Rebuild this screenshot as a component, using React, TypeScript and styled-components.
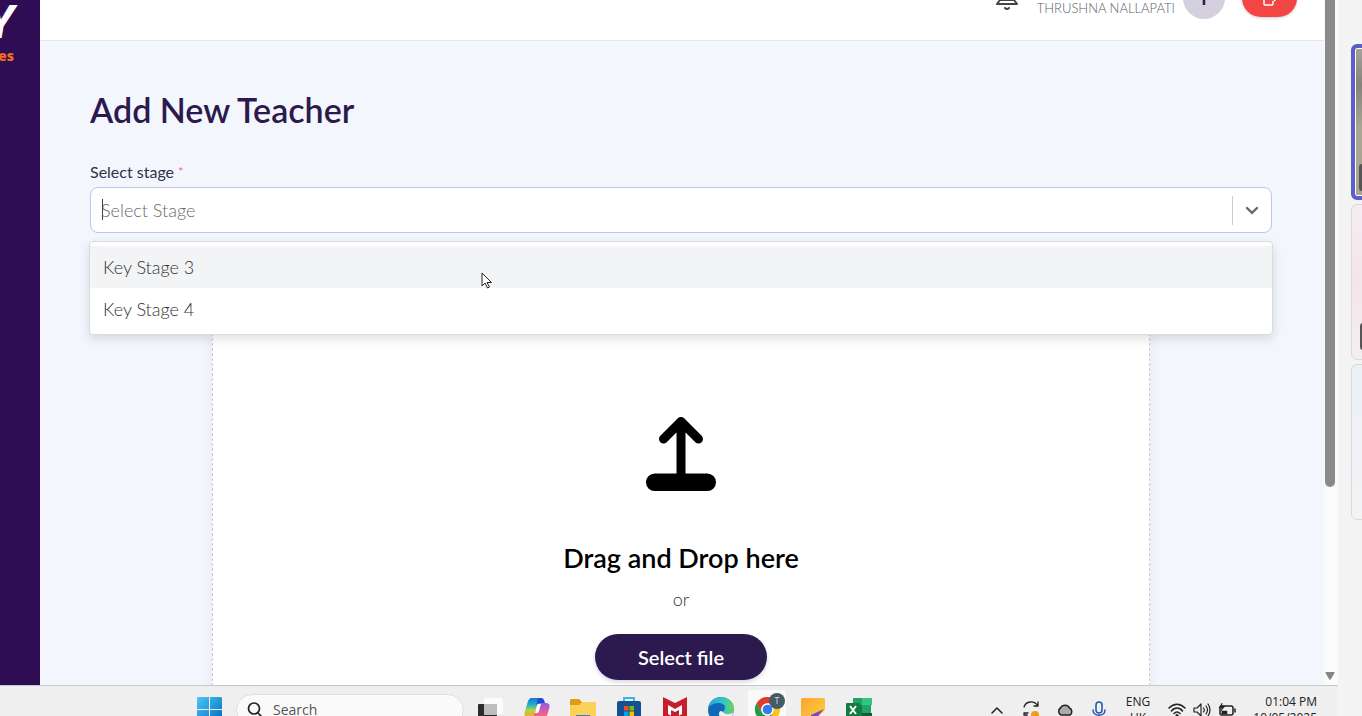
import React from "react";
import styled, { createGlobalStyle, css } from "styled-components";

const GlobalStyle = createGlobalStyle`
  *, *::before, *::after { box-sizing: border-box; }
  body { margin: 0; overflow: hidden; background: #f4f4f4; font-family: Lato, "Liberation Sans", sans-serif; color: #2c1a4f; }
  button, input { font: inherit; color: inherit; }
  button { border: 0; background: none; padding: 0; cursor: pointer; }
  svg { display: block; flex: none; }
`;

const Shell = styled.div`
  display: grid;
  grid-template-columns: minmax(0, 1fr) 24px;
  height: 100vh;
  overflow: hidden;
`;

const Desktop = styled.div`
  display: grid;
  grid-template-rows: minmax(0, 1fr) 31px;
  min-height: 0;
`;

const Browser = styled.div`
  display: grid;
  grid-template-columns: 40px minmax(0, 1fr) 14px;
  min-height: 0;
  overflow: hidden;
`;

const Sidebar = styled.aside`
  display: flex;
  flex-direction: column;
  align-items: flex-end;
  padding-right: 26px;
  background: #2e0d55;
  overflow: hidden;
`;

const LogoMark = styled.span`
  font-family: Roboto, sans-serif;
  font-size: 46px;
  line-height: 44px;
  font-weight: 800;
  font-style: italic;
  color: #fff;
`;

const LogoTagline = styled.span`
  font-family: "Open Sans", sans-serif;
  font-size: 14px;
  line-height: 24px;
  font-weight: 800;
  color: #f26a1b;
`;

const Main = styled.div`
  min-width: 0;
  background: #f4f6fd;
  overflow: hidden;
`;

const Header = styled.header`
  display: flex;
  align-items: center;
  justify-content: flex-end;
  height: 85px;
  margin-top: -44px;
  padding-right: 27px;
  background: #fff;
  border-bottom: 1px solid #e6e8ee;
`;

const IconButton = styled.button`
  display: flex;
  margin-right: 18px;
  color: #444;
`;

const User = styled.div`
  display: flex;
  flex-direction: column;
  align-items: flex-end;
  margin-right: 8px;
  font-size: 13px;
  font-weight: 300;
  line-height: 20px;
  color: #5c5c66;
`;

const Avatar = styled.div`
  display: flex;
  align-items: center;
  justify-content: center;
  width: 42px;
  height: 42px;
  margin-right: 17px;
  border-radius: 50%;
  background: #d5d0df;
  font-size: 18px;
  font-weight: 700;
`;

const LogoutButton = styled.button`
  display: flex;
  align-items: center;
  justify-content: center;
  width: 55px;
  height: 38px;
  border-radius: 19px;
  background: #f44545;
  box-shadow: 0 1px 3px rgba(0, 0, 0, 0.2);
  color: #fff;
`;

const Content = styled.main`
  padding: 49px 52px 0 50px;
`;

const Title = styled.h1`
  margin: 0 0 32px;
  font-size: 34px;
  line-height: 40px;
  font-weight: 600;
`;

const Label = styled.label`
  display: block;
  margin-bottom: 5px;
  font-size: 16px;
  line-height: 20px;
  color: #33304a;
`;

const Required = styled.span`
  color: #f06a6a;
  font-size: 12px;
  vertical-align: top;
`;

const Field = styled.div`
  position: relative;
`;

const Control = styled.div`
  display: flex;
  align-items: center;
  height: 46px;
  background: #fff;
  border: 1px solid #c3c2ea;
  border-radius: 8px;
`;

const ComboInput = styled.input`
  flex: 1;
  min-width: 0;
  height: 44px;
  padding: 0 10px;
  border: 0;
  outline: 0;
  background: none;
  font-size: 18px;
  font-weight: 300;
  &::placeholder { color: #6a6a6a; opacity: 1; }
`;

const Caret = styled.span`
  position: absolute;
  left: 12px;
  top: 12px;
  width: 1px;
  height: 21px;
  background: #444;
`;

const Toggle = styled.button`
  display: flex;
  align-items: center;
  justify-content: center;
  width: 39px;
  height: 29px;
  border-left: 1px solid #ccc;
  color: #666;
`;

const Menu = styled.ul`
  position: absolute;
  z-index: 2;
  top: 54px;
  left: -1px;
  right: -1px;
  margin: 0;
  padding: 4px 0;
  list-style: none;
  background: #fff;
  border: 1px solid #d9dae2;
  border-radius: 4px;
  box-shadow: 0 4px 11px rgba(0, 0, 0, 0.12);
`;

const Option = styled.li<{ $active?: boolean }>`
  padding: 11px 13px;
  font-size: 18px;
  font-weight: 300;
  line-height: 20px;
  color: #333;
  background: ${(p) => (p.$active ? "#f3f4f6" : "transparent")};
`;

const DropZone = styled.section`
  display: flex;
  flex-direction: column;
  align-items: center;
  margin: 60px 122px 0;
  padding: 123px 0 80px;
  background: #fff;
  border: 1px dashed #ccccd2;
  box-shadow: 0 0 12px rgba(40, 40, 80, 0.06);
  color: #000;
`;

const DropTitle = styled.h2`
  margin: 50px 0 12px;
  font-size: 27px;
  line-height: 34px;
  font-weight: 600;
`;

const DropHint = styled.p`
  margin: 0 0 23px;
  font-size: 18px;
  font-weight: 300;
  line-height: 24px;
  color: #333;
`;

const SelectFile = styled.button`
  height: 46px;
  padding: 0 43px;
  border-radius: 23px;
  background: #2c1a4f;
  box-shadow: 0 2px 4px rgba(60, 20, 100, 0.2);
  color: #fff;
  font-size: 20px;
  font-weight: 600;
`;

const Scrollbar = styled.div`
  display: flex;
  flex-direction: column;
  align-items: center;
  justify-content: space-between;
  padding: 0 3px 5px 1px;
  background: #fbfbfc;
`;

const Thumb = styled.div`
  width: 10px;
  height: calc(100% - 193px);
  border-radius: 0 0 5px 5px;
  background: #8a8a8a;
`;

const Taskbar = styled.footer`
  display: flex;
  align-items: center;
  height: 48px;
  padding: 0 21px 0 186px;
  background: #efefef;
  border-top: 1px solid #c3c8c9;
  font-family: "Open Sans", sans-serif;
  color: #222;
`;

const TaskButton = styled.button<{ $width?: number; $active?: boolean }>`
  position: relative;
  display: flex;
  flex: none;
  align-items: center;
  justify-content: center;
  width: ${(p) => p.$width ?? 46}px;
  height: 40px;
  ${(p) =>
    p.$active &&
    css`
      width: 38px;
      margin: 0 4px;
      border-radius: 4px;
      background: #fafafa;
    `}
`;

const SearchBox = styled.label`
  display: flex;
  align-items: center;
  gap: 10px;
  width: 228px;
  height: 32px;
  margin: 0 4px 0 4px;
  padding: 0 10px;
  border: 1px solid #e0e0e0;
  border-radius: 16px;
  background: #fafafa;
`;

const SearchInput = styled.input`
  flex: 1;
  min-width: 0;
  padding: 0;
  border: 0;
  outline: 0;
  background: none;
  font-size: 14px;
  &::placeholder { color: #555; opacity: 1; }
`;

const Badge = styled.span`
  position: absolute;
  top: 3px;
  right: 1px;
  width: 16px;
  height: 16px;
  border-radius: 50%;
  background: #455a64;
  color: #d5dde0;
  font-size: 9px;
  line-height: 16px;
  text-align: center;
`;

const Tray = styled.div`
  display: flex;
  align-items: center;
  margin-left: auto;
`;

const TrayText = styled.div<{ $width: number; $align: string }>`
  width: ${(p) => p.$width}px;
  font-size: 12px;
  line-height: 16px;
  text-align: ${(p) => p.$align};
  white-space: nowrap;
`;

const StatusGroup = styled.div`
  display: flex;
  margin-left: 4px;
`;

const Rail = styled.aside`
  display: flex;
  flex-direction: column;
  gap: 4px;
  padding: 44px 0 0 13px;
  background: #f4f4f4;
  overflow: hidden;
`;

const tileFill = {
  video: "linear-gradient(#a5a29c, #85847a 25%, #aaa795 55%, #a9a28f)",
  rose: "linear-gradient(#f6ecf1, #f3e6eb 50%, #f5eef0)",
  mist: "linear-gradient(#eaf1f5, #f1f1f5 60%, #f2f4f5)",
};

const Tile = styled.div<{ $tone: keyof typeof tileFill; $speaking?: boolean }>`
  display: flex;
  flex: none;
  align-items: flex-end;
  width: 276px;
  height: 156px;
  padding: 0 0 9px 8px;
  border: 1px solid #dcd8dc;
  border-radius: 6px;
  background: ${(p) => tileFill[p.$tone]};
  ${(p) =>
    p.$speaking &&
    css`
      padding: 0 0 5px 4px;
      border: 4px solid #5b5fc7;
      box-shadow: inset 0 0 0 1px #fff;
    `}
`;

const NameTag = styled.span`
  width: 90px;
  height: 27px;
  border-radius: 3px;
  background: #555;
`;

const BellIcon = () => (
  <svg width="24" height="24" viewBox="0 0 24 24" fill="none" stroke="currentColor" strokeWidth="2" strokeLinecap="round" strokeLinejoin="round">
    <path d="M12 2a7 7 0 0 0-7 7v5l-3 4h20l-3-4V9a7 7 0 0 0-7-7zM5 14h14M10 22q2 2 4 0" />
  </svg>
);

const LogoutIcon = () => (
  <svg width="18" height="18" viewBox="0 0 18 18" fill="none" stroke="currentColor" strokeWidth="1.5" strokeLinejoin="round">
    <path d="M12 5V3q0-1-1-1H4Q3 2 3 3v12q0 1 1 1h7q1 0 1-1v-3M8 9h8m-3-3 3 3-3 3" />
  </svg>
);

const UploadIcon = () => (
  <svg width="70" height="74" viewBox="0 0 70 74">
    <path d="M35 5v54M17.500 22 35 4.500 52.500 22" fill="none" stroke="#000" strokeWidth="9" strokeLinecap="round" strokeLinejoin="round" />
    <rect y="56.500" width="70" height="17.500" rx="8.700" />
  </svg>
);

const ChevronIcon = () => (
  <svg width="20" height="20" viewBox="0 0 20 20" fill="none" stroke="currentColor" strokeWidth="2.400" strokeLinecap="round">
    <path d="m5 8 5 4.800L15 8" />
  </svg>
);

const PointerIcon = styled.svg`
  position: absolute;
  z-index: 3;
  left: 391px;
  top: 85px;
`;

const WindowsIcon = () => (
  <svg width="25" height="25" viewBox="0 0 25 25">
    <defs>
      <linearGradient id="win" x1="0" y1="0" x2="1" y2="1">
        <stop stopColor="#4cc8f5" /><stop offset="1" stopColor="#0067c0" />
      </linearGradient>
    </defs>
    <path fill="url(#win)" d="M1 0h11v12H0V1zM13 0h11l1 1v11H13zM0 13h12v12H0zM13 13h12v12H13z" />
  </svg>
);

const SearchIcon = () => (
  <svg width="16" height="16" viewBox="0 0 16 16" fill="none" stroke="#222" strokeWidth="1.700" strokeLinecap="round">
    <circle cx="7" cy="6.500" r="5.500" /><path d="m11 11 4 4" />
  </svg>
);

const TaskViewIcon = () => (
  <svg width="26" height="24" viewBox="0 0 26 24">
    <rect x="6" width="19" height="16" rx="2" fill="#fbfbfb" />
    <rect y="6" width="19" height="17" rx="1" fill="#2b2b2b" />
    <path d="M6 6h13v11H6z" fill="#bdbdbd" />
  </svg>
);

const CopilotIcon = () => (
  <svg width="26" height="24" viewBox="0 0 26 24">
    <defs>
      <linearGradient id="cpA" x1="0" y1="0" x2="0" y2="1">
        <stop stopColor="#1676dd" /><stop offset=".35" stopColor="#22b1c4" /><stop offset=".65" stopColor="#b5d444" /><stop offset="1" stopColor="#f7a72d" />
      </linearGradient>
      <linearGradient id="cpB" x1="0" y1="0" x2="0" y2="1">
        <stop stopColor="#8e5be8" /><stop offset=".5" stopColor="#ea5b9c" /><stop offset="1" stopColor="#f9804d" />
      </linearGradient>
    </defs>
    <path fill="url(#cpA)" d="M7 0h11l-5 16c-1 2-2 3-4 3H3c-3 0-3-3-2-6L4 3c1-2 2-3 3-3z" />
    <path fill="#1c4fd0" d="M14 0h3c2 0 3 1 4 5h-5c-2 0-3 1-4 3z" />
    <path fill="url(#cpB)" d="M17 5h5c4 0 4 3 3 6l-3 10c-1 2-2 3-4 3H8l5-16c1-2 2-3 4-3z" />
    <path fill="#fff" d="m13 7-2 8h2c1 0 2-1 2-2l2-7h-2c-1 0-2 0-2 1z" />
  </svg>
);

const FolderIcon = () => (
  <svg width="26" height="22" viewBox="0 0 26 22">
    <path fill="#dc9c16" d="M1 0h8l3 3h13v6H0V1z" />
    <path fill="#fdd057" d="M0 6h9l3-3h13l1 1v17H0z" />
    <path fill="#2587c9" d="M6 16h14v6H6z" />
  </svg>
);

const StoreIcon = () => (
  <svg width="24" height="25" viewBox="0 0 24 25">
    <path d="M7 5V1h10v4" fill="none" stroke="#38b3e4" strokeWidth="1.800" />
    <rect y="4" width="24" height="21" rx="2" fill="#125093" />
    <path fill="#f25022" d="M7 9h4.500v4.500H7z" /><path fill="#7fba00" d="M12.500 9H17v4.500h-4.500z" />
    <path fill="#00a4ef" d="M7 14.500h4.500V19H7z" /><path fill="#ffb900" d="M12.500 14.500H17V19h-4.500z" />
  </svg>
);

const McAfeeIcon = () => (
  <svg width="24" height="25" viewBox="0 0 24 25">
    <path fill="#c3202c" d="m0 0 12 6 12-6v19l-12 6-12-6z" />
    <path fill="#fff" d="m5 8 7 4 7-4v9l-7 4-7-4z" />
    <path fill="#c3202c" d="m8 13 4 2 4-2v9H8z" />
  </svg>
);

const EdgeIcon = () => (
  <svg width="26" height="26" viewBox="0 0 26 26">
    <defs>
      <linearGradient id="edgeTop" x1="0" y1="0" x2="1" y2="0">
        <stop stopColor="#2aa5df" /><stop offset=".55" stopColor="#31c4cb" /><stop offset="1" stopColor="#69d457" />
      </linearGradient>
    </defs>
    <circle cx="13" cy="13" r="13" fill="#1167b8" />
    <path fill="url(#edgeTop)" d="M0 12C1 5 6 0 13 0c8 0 13 6 13 11 0 4-3 6-6 6s-5-1-5-2 2-2 2-5c0-2-3-4-7-4-5 0-9 3-10 6z" />
    <path fill="#efefef" d="M15 15c-2-2-4-1-4 2 0 4 4 6 8 6 2 0 4-1 5-3 1-3 2-5 2-7-1 3-3 4-6 4s-4-1-5-2z" />
  </svg>
);

const ChromeIcon = () => (
  <svg width="25" height="25" viewBox="0 0 24 24">
    <circle cx="12" cy="12" r="12" fill="#fbc116" />
    <path fill="#e33b2e" d="M1.600 6A12 12 0 0 1 22.400 6H12a6 6 0 0 0-5.200 9z" />
    <path fill="#229c4c" d="M1.600 6A12 12 0 0 0 12 24l5.200-9A6 6 0 0 1 6.800 15z" />
    <circle cx="12" cy="12" r="6" fill="#fff" /><circle cx="12" cy="12" r="4.600" fill="#2d7cf0" />
  </svg>
);

const NotesIcon = () => (
  <svg width="24" height="24" viewBox="0 0 24 24">
    <defs>
      <linearGradient id="note" x1="0" y1="0" x2="1" y2="1">
        <stop stopColor="#fba52c" /><stop offset="1" stopColor="#fdd347" />
      </linearGradient>
    </defs>
    <path fill="url(#note)" d="M2 0h20q2 0 2 2v10L12 24H0V2q0-2 2-2z" />
    <path fill="#7a45c8" d="m23 11-13 6 2 7z" />
  </svg>
);

const ExcelIcon = () => (
  <svg width="26" height="24" viewBox="0 0 26 24">
    <path fill="#21a366" d="M7 0h18v24H7z" /><path fill="#33c481" d="M16 0h9q1 0 1 1v6H16z" />
    <path fill="#107c41" d="M7 7h9v17H7z" /><path fill="#185c37" d="M16 15h10v9H16z" />
    <rect y="5" width="14" height="14" rx="1" fill="#107c41" />
    <path d="m4 8 6 8M10 8l-6 8" stroke="#fff" strokeWidth="2" />
  </svg>
);

const line = { fill: "none", stroke: "#222", strokeWidth: 1.5, strokeLinecap: "round" as const, strokeLinejoin: "round" as const };

const TrayUpIcon = () => <svg width="12" height="12" viewBox="0 0 12 12" {...line}><path d="m1 9 5-5 5 5" /></svg>;
const SyncIcon = () => (
  <svg width="18" height="18" viewBox="0 0 18 18" {...line} strokeWidth={1.3}>
    <path d="M2 6c2-6 10-7 14-1M16 1v4h-4M6 12H2v2h3v3" />
    <circle cx="13" cy="14" r="4" fill="#f59a11" stroke="none" />
  </svg>
);
const CloudIcon = () => (
  <svg width="18" height="14" viewBox="0 0 18 14" {...line}>
    <path fill="#aaa" d="M5 12a4 4 0 0 1-.5-7 5 5 0 0 1 9 0A4 4 0 0 1 14 12z" />
  </svg>
);
const MicIcon = () => (
  <svg width="14" height="18" viewBox="0 0 14 18" {...line} stroke="#1d56ab">
    <rect x="4" y="1" width="6" height="11" rx="3" /><path d="M1 9c0 7 12 7 12 0M7 14v3" />
  </svg>
);
const WifiIcon = () => (
  <svg width="18" height="14" viewBox="0 0 18 14" {...line}>
    <path d="M1 5c5-5 11-5 16 0M3.500 8c3-4 8-4 11 0M6 10.500c2-2 4-2 6 0" /><circle cx="9" cy="12.500" r=".8" />
  </svg>
);
const VolumeIcon = () => (
  <svg width="18" height="14" viewBox="0 0 18 14" {...line} strokeWidth={1.2}>
    <path d="M1 5h3l4-4v12L4 9H1zM10.500 5q1.500 2 0 4M13 3q3 4 0 8M15 1q4 6 0 12" />
  </svg>
);
const BatteryIcon = () => (
  <svg width="18" height="14" viewBox="0 0 18 14" {...line}>
    <rect x="2" y="3" width="13" height="9" rx="2" /><path d="M17 6v3" />
    <path fill="#222" d="M4 8h5v3H4zM4 0 1 5h3L3 8l4-5H4z" strokeWidth=".5" />
  </svg>
);

const apps = [
  { name: "Task view", Icon: TaskViewIcon },
  { name: "Copilot", Icon: CopilotIcon },
  { name: "File Explorer", Icon: FolderIcon },
  { name: "Microsoft Store", Icon: StoreIcon },
  { name: "McAfee", Icon: McAfeeIcon },
  { name: "Edge", Icon: EdgeIcon },
  { name: "Chrome", Icon: ChromeIcon, badge: "T" },
  { name: "Sticky Notes", Icon: NotesIcon },
  { name: "Excel", Icon: ExcelIcon },
];

const trayApps = [
  { name: "Hidden icons", Icon: TrayUpIcon },
  { name: "Updates", Icon: SyncIcon },
  { name: "OneDrive", Icon: CloudIcon },
  { name: "Microphone", Icon: MicIcon },
];

const statusIcons = [
  { name: "Network", Icon: WifiIcon },
  { name: "Volume", Icon: VolumeIcon },
  { name: "Battery", Icon: BatteryIcon },
];

export default function App() {
  return (
    <>
      <GlobalStyle />
      <Shell>
        <Desktop>
          <Browser>
            <Sidebar>
              <LogoMark>Y</LogoMark>
              <LogoTagline>es</LogoTagline>
            </Sidebar>
            <Main>
              <Header>
                <IconButton aria-label="Notifications"><BellIcon /></IconButton>
                <User>
                  <span>&nbsp;</span>
                  <span>THRUSHNA NALLAPATI</span>
                </User>
                <Avatar>T</Avatar>
                <LogoutButton aria-label="Log out"><LogoutIcon /></LogoutButton>
              </Header>
              <Content>
                <Title>Add New Teacher</Title>
                <Label htmlFor="stage">Select stage <Required>*</Required></Label>
                <Field>
                  <Control>
                    <ComboInput id="stage" role="combobox" aria-expanded="true" aria-controls="stage-options" placeholder="Select Stage" />
                    <Toggle aria-label="Toggle stages"><ChevronIcon /></Toggle>
                  </Control>
                  <Caret />
                  <Menu id="stage-options" role="listbox">
                    <Option role="option" aria-selected="false" $active>Key Stage 3</Option>
                    <Option role="option" aria-selected="false">Key Stage 4</Option>
                  </Menu>
                  <PointerIcon width="12" height="18" viewBox="0 0 12 18">
                    <path d="M1 1v13l3-3 2.500 5 2-1L6 10.500h4.500z" fill="#fff" stroke="#222" />
                  </PointerIcon>
                </Field>
                <DropZone>
                  <UploadIcon />
                  <DropTitle>Drag and Drop here</DropTitle>
                  <DropHint>or</DropHint>
                  <SelectFile>Select file</SelectFile>
                </DropZone>
              </Content>
            </Main>
            <Scrollbar>
              <Thumb />
              <svg width="10" height="8" viewBox="0 0 10 8"><path d="M1 0h8q1 0 .5 1L6 7q-1 1.500-2 0L.5 1Q0 0 1 0z" fill="#858585" /></svg>
            </Scrollbar>
          </Browser>
          <Taskbar>
            <TaskButton aria-label="Start"><WindowsIcon /></TaskButton>
            <SearchBox>
              <SearchIcon />
              <SearchInput type="search" placeholder="Search" aria-label="Search" />
            </SearchBox>
            {apps.map(({ name, Icon, badge }) => (
              <TaskButton key={name} aria-label={name} $active={Boolean(badge)}>
                <Icon />
                {badge && <Badge>{badge}</Badge>}
              </TaskButton>
            ))}
            <Tray>
              {trayApps.map(({ name, Icon }) => (
                <TaskButton key={name} aria-label={name} $width={34}><Icon /></TaskButton>
              ))}
              <TrayText $width={44} $align="center">ENG<br />UK</TrayText>
              <StatusGroup>
                {statusIcons.map(({ name, Icon }) => (
                  <TaskButton key={name} aria-label={name} $width={25}><Icon /></TaskButton>
                ))}
              </StatusGroup>
              <TrayText $width={78} $align="right">01:04 PM<br />10/05/2025</TrayText>
            </Tray>
          </Taskbar>
        </Desktop>
        <Rail>
          <Tile $tone="video" $speaking><NameTag /></Tile>
          <Tile $tone="rose"><NameTag /></Tile>
          <Tile $tone="mist" />
        </Rail>
      </Shell>
    </>
  );
}
